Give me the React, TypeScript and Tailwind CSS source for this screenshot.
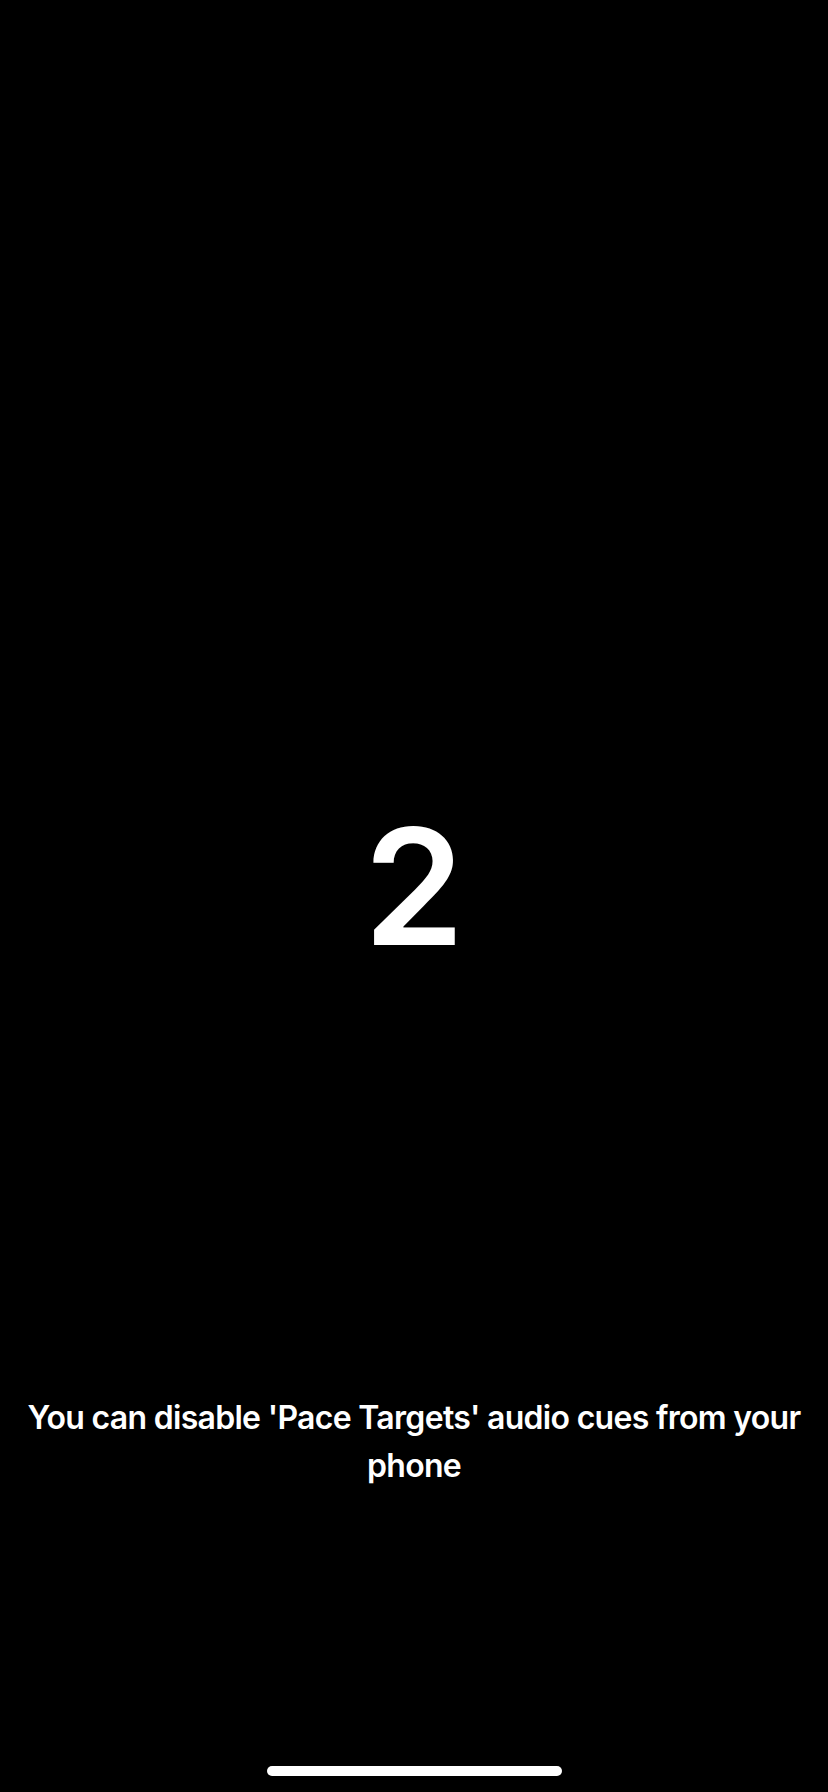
export default function App() {
  return (
    <main
      className="h-[1792px] w-full bg-black text-white flex flex-col items-center"
      style={{ fontFamily: 'Inter, "Noto Sans", sans-serif' }}
    >
      <div className="pt-[805px] h-[967px] text-[162px] leading-none font-semibold">2</div>

      <p className="mt-[427px] px-4 text-center text-[32px] leading-[48px] font-semibold tracking-[-0.7px]">
        You can disable 'Pace Targets' audio cues from your phone
      </p>

      <div className="mt-auto mb-4 h-[10px] w-[295px] rounded-full bg-white" />
    </main>
  )
}
